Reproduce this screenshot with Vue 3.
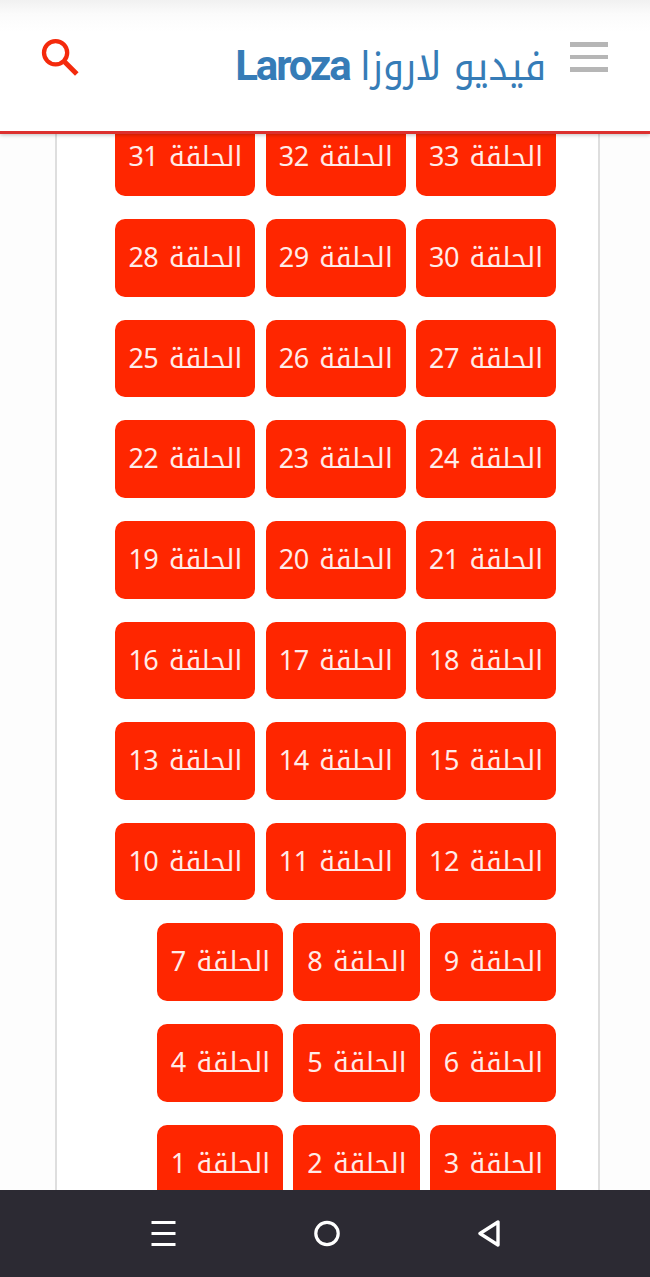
<script setup>
import { ref } from 'vue';

const rows = ref([
  [33, 32, 31],
  [30, 29, 28],
  [27, 26, 25],
  [24, 23, 22],
  [21, 20, 19],
  [18, 17, 16],
  [15, 14, 13],
  [12, 11, 10],
  [9, 8, 7],
  [6, 5, 4],
  [3, 2, 1]
]);
</script>

<template>
  <div class="screen" dir="rtl">
    <header class="header">
      <button type="button" class="menuBtn">
        <span></span>
        <span></span>
        <span></span>
      </button>
      <h1 class="title"><span class="titleAr">فيديو لاروزا</span> <b>Laroza</b></h1>
      <svg class="search" width="38" height="38" viewBox="0 0 38 38">
        <circle cx="14.6" cy="13.8" r="11.6" fill="none" stroke="#f42a0c" stroke-width="4.3" />
        <path d="M23.8 23 L35.8 35" fill="none" stroke="#f42a0c" stroke-width="5" />
      </svg>
    </header>

    <main class="content">
      <div class="panel">
        <div v-for="row in rows" :key="row[0]" class="row">
          <a v-for="number in row" :key="number" class="episode" :class="{ small: number < 10 }">
            <span class="word">الحلقة</span>
            <span class="number">{{ number }}</span>
          </a>
        </div>
      </div>
    </main>

    <nav class="navbar" dir="ltr">
      <svg width="26" height="28" viewBox="0 0 26 28">
        <path d="M1.5 2.5 H25.5 M1.5 13.5 H25.5 M1.5 24.5 H25.5" stroke="#fff" stroke-width="3.2" />
      </svg>
      <svg width="28" height="28" viewBox="0 0 28 28">
        <circle cx="14" cy="13.5" r="11.2" fill="none" stroke="#fff" stroke-width="3.2" />
      </svg>
      <svg width="24" height="28" viewBox="0 0 24 28">
        <path
          d="M21 2 V25 L3 13.5 Z"
          fill="none"
          stroke="#fff"
          stroke-width="3.4"
          stroke-linejoin="round"
        />
      </svg>
    </nav>
  </div>
</template>

<style>
body {
  margin: 0;
  background-color: #fff;
}
</style>

<style scoped>
.screen {
  display: flex;
  flex-direction: column;
  width: 650px;
  height: 1277px;
  overflow: hidden;
  font-family: 'Noto Sans', 'Noto Kufi Arabic', 'Noto Sans Arabic', 'DejaVu Sans', sans-serif;
}
.header {
  position: relative;
  flex: none;
  display: flex;
  align-items: flex-start;
  box-sizing: border-box;
  height: 134px;
  padding: 0 42px 0 41px;
  background: linear-gradient(#f1f1f1, #fbfbfb 14px, #fff 32px);
  border-bottom: 3px solid #dc302e;
  box-shadow: 0 1px 4px rgba(0, 0, 0, 0.25);
}
.menuBtn {
  display: flex;
  flex-direction: column;
  gap: 8px;
  width: 38px;
  margin: 42px 0 0;
  padding: 0;
  border: none;
  background: none;
}
.menuBtn span {
  height: 4.7px;
  background-color: #b6b6b6;
}
.title {
  display: flex;
  align-items: baseline;
  gap: 11px;
  margin: 41px 24px 0 0;
  color: #367cb7;
  font-size: 40px;
  line-height: 48px;
  font-weight: 400;
  white-space: nowrap;
}
.titleAr {
  margin-left: -14px;
  word-spacing: 3px;
  transform: scaleX(0.935);
  transform-origin: right;
}
.title b {
  font-family: Roboto, sans-serif;
  font-size: 42px;
  font-weight: 700;
  letter-spacing: -2.1px;
}
.search {
  margin: 39px auto 0 0;
}
.content {
  flex: 1;
  min-height: 0;
  padding: 0 50px 0 55px;
  background-color: #fdfdfd;
  overflow: hidden;
}
.panel {
  display: flow-root;
  box-sizing: border-box;
  height: 100%;
  padding-right: 42px;
  border: solid #dedede;
  border-width: 0 2px;
  background-color: #fff;
}
.row {
  display: flex;
  gap: 10.3px;
  margin-bottom: 23px;
}
.row:first-child {
  margin-top: -15.7px;
}
.episode {
  display: flex;
  align-items: baseline;
  justify-content: space-between;
  box-sizing: border-box;
  width: 140px;
  height: 77.65px;
  padding: 0 13px;
  border-radius: 10px;
  background-color: #ff2600;
  color: #ffebe8;
  font-size: 27px;
  line-height: 75.6px;
  white-space: nowrap;
}
.episode.small {
  width: 126.2px;
  padding-left: 14px;
}
.number {
  font-size: 27px;
  letter-spacing: -0.5px;
}
.navbar {
  flex: none;
  display: flex;
  align-items: center;
  justify-content: space-between;
  box-sizing: border-box;
  height: 87px;
  padding: 0 149px 0 150px;
  background-color: #2c2a33;
}
</style>
